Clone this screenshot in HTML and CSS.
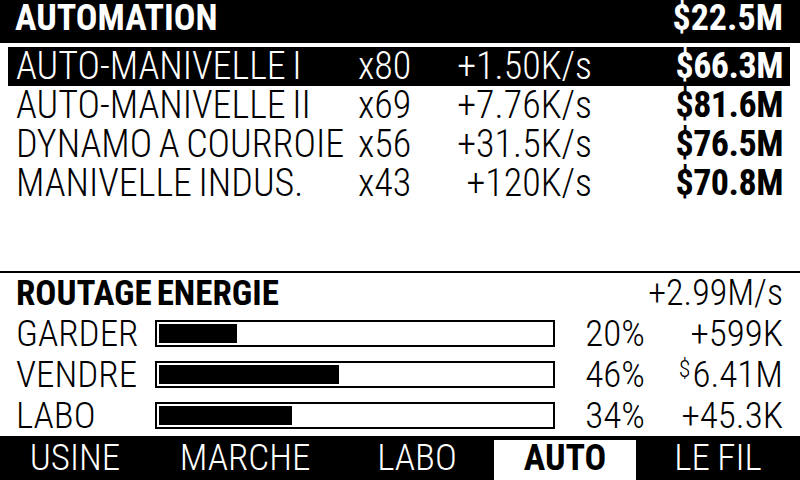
FILE: index.html
```html
<!DOCTYPE html>
<html><head><meta charset="utf-8"><link rel="stylesheet" href="styles.css"></head>
<body>
<div class="screen">
  <header class="topbar">
    <span class="bold title">AUTOMATION</span>
    <span class="bold title">$22.5M</span>
  </header>
  <section class="list">
    <div class="row selected">
      <span class="name">AUTO-MANIVELLE I</span><span class="qty">x80</span><span class="rate">+1.50K/s</span><span class="price bold">$66.3M</span>
    </div>
    <div class="row">
      <span class="name">AUTO-MANIVELLE II</span><span class="qty">x69</span><span class="rate">+7.76K/s</span><span class="price bold">$81.6M</span>
    </div>
    <div class="row">
      <span class="name">DYNAMO A COURROIE</span><span class="qty">x56</span><span class="rate">+31.5K/s</span><span class="price bold">$76.5M</span>
    </div>
    <div class="row">
      <span class="name">MANIVELLE INDUS.</span><span class="qty">x43</span><span class="rate">+120K/s</span><span class="price bold">$70.8M</span>
    </div>
  </section>
  <section class="routing">
    <div class="rhead">
      <span class="bold rtitle">ROUTAGE ENERGIE</span>
      <span class="rtotal">+2.99M/s</span>
    </div>
    <div class="erow">
      <span class="label">GARDER</span>
      <div class="bar"><div class="fill" style="width:20%"></div></div>
      <span class="pct">20%</span><span class="val">+599K</span>
    </div>
    <div class="erow">
      <span class="label">VENDRE</span>
      <div class="bar"><div class="fill" style="width:46%"></div></div>
      <span class="pct">46%</span><span class="val"><span class="cur">$</span>6.41M</span>
    </div>
    <div class="erow">
      <span class="label">LABO</span>
      <div class="bar"><div class="fill" style="width:34%"></div></div>
      <span class="pct">34%</span><span class="val">+45.3K</span>
    </div>
  </section>
  <nav class="tabs">
    <span class="tab">USINE</span>
    <span class="tab">MARCHE</span>
    <span class="tab">LABO</span>
    <span class="tab active bold">AUTO</span>
    <span class="tab">LE FIL</span>
  </nav>
</div>
</body></html>
```
FILE: styles.css
```css
html,body{margin:0;padding:0;background:#fff}
.screen{width:800px;height:480px;overflow:hidden;display:flex;flex-direction:column;background:#fff;color:#000;
  font-family:"Roboto Condensed",Roboto,sans-serif;font-weight:300;font-size:38px}
.bold{font-weight:700}
.topbar{height:43px;flex:none;background:#000;color:#fff;display:flex;justify-content:space-between;align-items:flex-start;padding:0 17px 0 15px;box-sizing:border-box}
.title{font-size:36px;line-height:36px}
.list{height:228px;flex:none;padding-top:4px;box-sizing:border-box}
.row{height:39px;margin:0 10px 0 8px;padding:0 7px 0 8px;display:grid;grid-template-columns:342px 80px 154px 1fr;align-items:center;line-height:39px;white-space:nowrap}
.name{word-spacing:-2px}
.row.selected{background:#000;color:#fff}
.rate{text-align:right}
.price{text-align:right;font-size:36px;letter-spacing:-0.5px}
.routing{flex:none;border-top:2px solid #000;height:165px;box-sizing:border-box}
.rhead{height:40px;display:flex;justify-content:space-between;align-items:center;padding:0 17px 0 16px;white-space:nowrap}
.rtitle{font-size:35px;word-spacing:-3px}
.rtotal{font-size:36px}
.erow{height:41px;display:grid;grid-template-columns:139px 400px 90px 1fr;align-items:center;padding:0 17px 0 16px;line-height:41px;white-space:nowrap;font-size:37px}
.bar{height:27px;border:2px solid #000;padding:2px;box-sizing:border-box;background:#fff}
.fill{height:100%;background:#000}
.pct,.val{text-align:right}
.cur{font-size:24px;line-height:30px;vertical-align:top;margin-right:2px}
.tabs{flex:1;background:#000;color:#fff;display:grid;grid-template-columns:150px 190px 154px 142px 1fr;padding:4px 0;box-sizing:border-box;white-space:nowrap}
.tab{display:flex;align-items:center;justify-content:center;font-size:37px;line-height:36px;padding-bottom:5px;word-spacing:-1px}
.tab.active{background:#fff;color:#000;font-size:36px}
```
